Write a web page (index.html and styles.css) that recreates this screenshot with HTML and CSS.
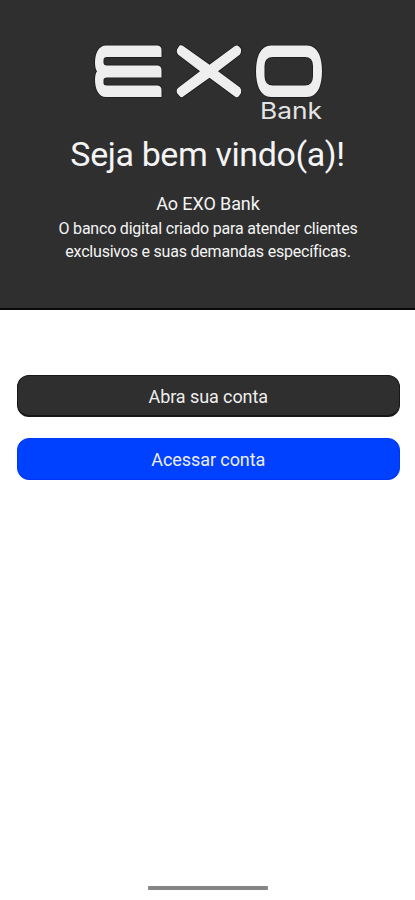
FILE: index.html
```html
<!DOCTYPE html>
<html lang="pt-BR">
<head>
<meta charset="utf-8">
<meta name="viewport" content="width=device-width, initial-scale=1">
<title>EXO Bank</title>
<link rel="stylesheet" href="styles.css">
</head>
<body>
<main class="screen">
  <header class="hero">
    <svg class="logo" viewBox="0 0 235 84" role="img" aria-label="EXO Bank">
      <g class="logo-edge">
        <path d="M16 5.5H67Q71.500 5.500 71.500 10V17H17Q13.500 17 13.500 20V22.500Q13.500 25.500 17 25.500H67Q71.500 25.500 71.500 30V37.500H17Q13.500 37.500 13.500 40V43Q13.500 45.500 17 45.500H67Q71.500 45.500 71.500 50V57H16Q10.500 57 7.500 51.500Q5 47 5 40Q5 34 7 31.300Q5 28.500 5 22.500Q5 15.500 7.500 11Q10.500 5.500 16 5.500Z"/>
        <path d="M89.500 5.500Q91.500 4.700 93.500 6.300L119.500 24.700L144.500 6.300Q147 4.500 149 6.500L151 9Q151.500 13 150 14.500L128 31.300L150 47.500Q152 50 151 53L149 56Q147 58.200 144.500 56.300L119.500 37.800L93.500 56.300Q91.500 58.200 89.500 56L87 53Q86 49.500 88 48L110 31.300L88 14.500Q86 12.500 87 9.500Z"/>
        <path fill-rule="evenodd" d="M181 5.500H217Q225 5.500 229 14Q232 21 232 31.500Q232 41 229 48.500Q225 57 217 57H181Q173 57 169 48.500Q166 41 166 31.500Q166 21 169 14Q173 5.500 181 5.500ZM183 17Q174.500 17 174.500 26V36Q174.500 45.500 183 45.500H215Q223 45.500 223 36V26Q223 17 215 17Z"/>
      </g>
      <text class="logo-sub" x="170" y="79" textLength="62" lengthAdjust="spacingAndGlyphs">Bank</text>
    </svg>
    <h1 class="title">Seja bem vindo(a)!</h1>
    <h2 class="subtitle">Ao EXO Bank</h2>
    <p class="description">O banco digital criado para atender clientes<br>exclusivos e suas demandas específicas.</p>
  </header>
  <nav class="actions">
    <button class="button button-dark" type="button">Abra sua conta</button>
    <button class="button button-blue" type="button">Acessar conta</button>
  </nav>
  <div class="home-indicator"></div>
</main>
</body>
</html>
```
FILE: styles.css
```css
* { box-sizing: border-box; }
body { margin: 0; background: #fff; font-family: Roboto, "Liberation Sans", sans-serif; }
.screen { height: 900px; display: flex; flex-direction: column; overflow: hidden; }
.hero {
  height: 310px;
  padding-top: 40px;
  flex: none;
  display: flex;
  flex-direction: column;
  align-items: center;
  background: #2f2f2f;
  border-bottom: 2px solid #080808;
  color: #f4f4f4;
  text-align: center;
}
.logo { display: block; width: 235px; height: 84px; flex: none; }
.logo-edge { fill: #eee; stroke: #1b1b1b; stroke-width: 1.5px; paint-order: stroke; }
.logo-sub { fill: #e4e4e4; font: 23px Inter, sans-serif; font-weight: 400; }
.title { margin: 10px 0 0; font-size: 34px; line-height: 40px; font-weight: 400; letter-spacing: -0.4px; }
.subtitle { margin: 18px 0 0; font-size: 18px; line-height: 24px; font-weight: 400; letter-spacing: -0.1px; padding-left: 1px; }
.description { margin: 2px 0 0; padding-left: 1px; font-size: 16px; line-height: 22.5px; letter-spacing: -0.21px; white-space: nowrap; }
.actions { display: flex; flex-direction: column; gap: 21px; padding: 65.4px 15px 0 16.5px; }
.button {
  height: 42px;
  padding: 0;
  border: 1px solid #171717;
  border-radius: 12px;
  color: #eee;
  font: 400 18px/39px Roboto, "Liberation Sans", sans-serif;
  letter-spacing: -0.08px;
}
.button-dark { background: #2f2f2f; border-bottom-width: 2px; padding-top: 2px; line-height: 37px; }
.button-blue { background: #0040ff; border-color: #0037f5; }
.home-indicator { width: 120px; height: 4px; margin: auto auto 10px; border-radius: 1px; background: #858585; }
```
